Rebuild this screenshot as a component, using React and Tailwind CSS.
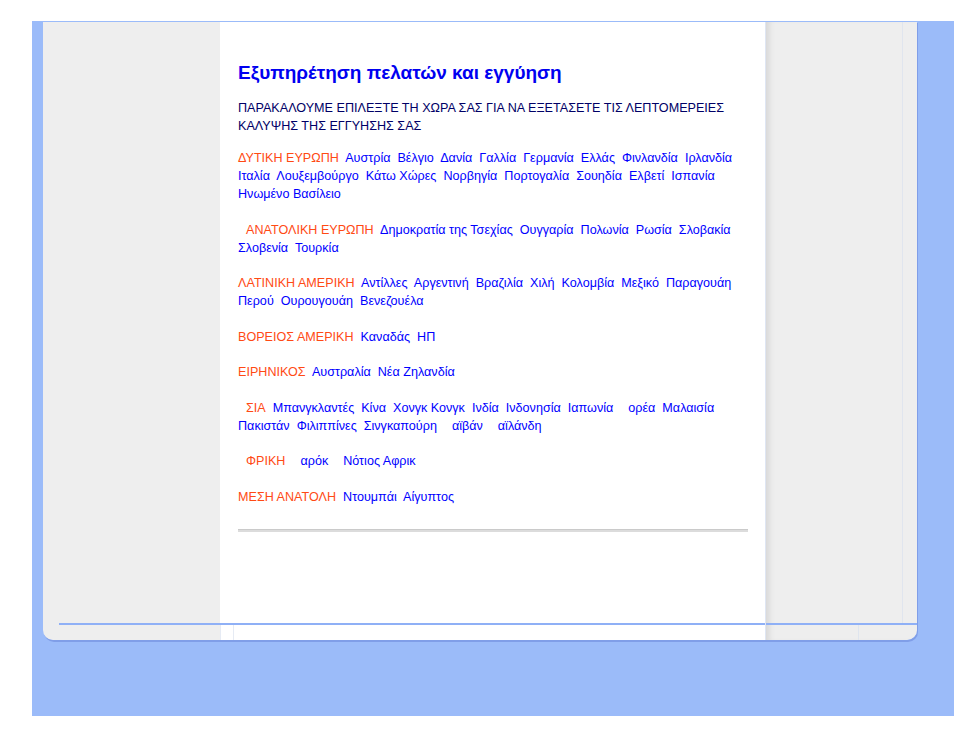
import { Fragment } from "react";

const regions = [
  {
    name: "ΔΥΤΙΚΗ ΕΥΡΩΠΗ",
    items: [
      "Αυστρία", "Βέλγιο", "Δανία", "Γαλλία", "Γερμανία", "Ελλάς", "Φινλανδία", "Ιρλανδία",
      "Ιταλία", "Λουξεμβούργο", "Κάτω Χώρες", "Νορβηγία", "Πορτογαλία", "Σουηδία", "Ελβετί", "Ισπανία",
      "Ηνωμένο Βασίλειο",
    ],
  },
  {
    name: "ΑΝΑΤΟΛΙΚΗ ΕΥΡΩΠΗ",
    lead: true,
    items: ["Δημοκρατία της Τσεχίας", "Ουγγαρία", "Πολωνία", "Ρωσία", "Σλοβακία", "Σλοβενία", "Τουρκία"],
  },
  {
    name: "ΛΑΤΙΝΙΚΗ ΑΜΕΡΙΚΗ",
    items: ["Αντίλλες", "Αργεντινή", "Βραζιλία", "Χιλή", "Κολομβία", "Μεξικό", "Παραγουάη", "Περού", "Ουρουγουάη", "Βενεζουέλα"],
  },
  { name: "ΒΟΡΕΙΟΣ ΑΜΕΡΙΚΗ", items: ["Καναδάς", "ΗΠ"] },
  { name: "ΕΙΡΗΝΙΚΟΣ", items: ["Αυστραλία", "Νέα Ζηλανδία"] },
  {
    name: "ΣΙΑ",
    lead: true,
    items: [
      "Μπανγκλαντές", "Κίνα", "Χονγκ Κονγκ", "Ινδία", "Ινδονησία", "Ιαπωνία", "~ορέα", "Μαλαισία",
      "Πακιστάν", "Φιλιππίνες", "Σινγκαπούρη", "~αϊβάν", "~αϊλάνδη",
    ],
  },
  { name: "ΦΡΙΚΗ", lead: true, items: ["~αρόκ", "~Νότιος Αφρικ"] },
  { name: "ΜΕΣΗ ΑΝΑΤΟΛΗ", items: ["Ντουμπάι", "Αίγυπτος"] },
];

// blank left where the page's font had no glyph
const Gap = () => <span className="inline-block w-[8px]" />;

const Region = ({ region }) => (
  <p className="mb-[17.5px]">
    {region.lead && <Gap />}
    <span className="text-[#ff4a14]">{region.name}</span>
    {region.items.map((item) => (
      <Fragment key={item}>
        {"\u00a0 "}
        {item.startsWith("~") && <Gap />}
        <a className="text-[#0000ff] cursor-pointer">{item.replace("~", "")}</a>
      </Fragment>
    ))}
  </p>
);

export default function App() {
  return (
    <div className="pt-[21px] pl-[32px] bg-white font-['Liberation_Sans',Arial,sans-serif]">
      <div className="w-[922px] h-[695px] bg-[#9bbbf9] pl-[11px] pr-[37px]">
        <div className="flex h-[619px] pt-px rounded-b-[10px] shadow-[1px_2px_0_#809ee8] overflow-hidden">
          {/* left column */}
          <div className="w-[177px] flex flex-col bg-[#eeeeee]">
            <div className="flex-1" />
            <div className="h-[17px] ml-4 border-t-2 border-[#8fb0f6]" />
          </div>

          {/* content */}
          <div className="w-[546px] flex flex-col bg-white border-r border-[#dfe6f3]">
            <div className="flex-1 pl-[18px] pr-[17px] pt-[40px]">
              <h1 className="text-[19px] leading-[22px] font-bold text-[#0000f0] mb-[15px]">
                Εξυπηρέτηση πελατών και εγγύηση
              </h1>
              <div className="text-[12.6px] leading-[18px]">
                <p className="text-[#000066] mb-[14px]">
                  ΠΑΡΑΚΑΛΟΥΜΕ ΕΠΙΛΕΞΤΕ ΤΗ ΧΩΡΑ ΣΑΣ ΓΙΑ ΝΑ ΕΞΕΤΑΣΕΤΕ ΤΙΣ ΛΕΠΤΟΜΕΡΕΙΕΣ ΚΑΛΥΨΗΣ ΤΗΣ ΕΓΓΥΗΣΗΣ ΣΑΣ
                </p>
                {regions.map((r) => (
                  <Region key={r.name} region={r} />
                ))}
              </div>
              <div className="mt-[23px] h-[3px] bg-[#dcdcdc] border-t border-[#cacaca]" />
            </div>
            <div className="h-[17px] flex border-t-2 border-[#8fb0f6]">
              <div className="w-[14px] border-l border-r border-[#e6ebf4]" />
              <div className="flex-1" />
            </div>
          </div>

          {/* right column */}
          <div className="flex-1 flex flex-col bg-[#eeeeee] shadow-[inset_7px_0_6px_-4px_rgba(0,0,0,0.10)]">
            <div className="flex-1 flex">
              <div className="w-[137px] border-r border-[#e0e5ee]" />
              <div className="flex-1" />
            </div>
            <div className="h-[17px] flex border-t-2 border-[#8fb0f6]">
              <div className="w-[93px] border-r border-[#dfe5ee]" />
              <div className="flex-1" />
            </div>
          </div>
        </div>
      </div>
    </div>
  );
}
